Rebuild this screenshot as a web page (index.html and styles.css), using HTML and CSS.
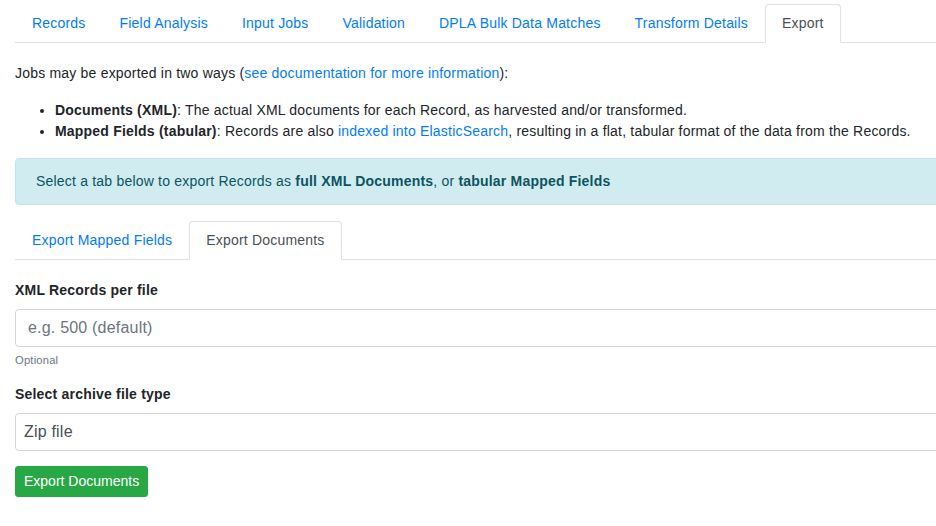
FILE: index.html
```html
<!DOCTYPE html>
<html lang="en">
<head>
<meta charset="utf-8">
<title>Export</title>
<link rel="stylesheet" href="styles.css">
</head>
<body>
<div class="page">
  <ul class="tabs">
    <li class="tab"><a class="tab-link" href="#">Records</a></li>
    <li class="tab"><a class="tab-link" href="#">Field Analysis</a></li>
    <li class="tab"><a class="tab-link" href="#">Input Jobs</a></li>
    <li class="tab"><a class="tab-link" href="#">Validation</a></li>
    <li class="tab"><a class="tab-link" href="#">DPLA Bulk Data Matches</a></li>
    <li class="tab"><a class="tab-link" href="#">Transform Details</a></li>
    <li class="tab"><a class="tab-link active" href="#">Export</a></li>
  </ul>
  <div class="tab-pane">
    <p class="intro">Jobs may be exported in two ways (<a href="#">see documentation for more information</a>):</p>
    <ul class="ways">
      <li><strong>Documents (XML)</strong>: The actual XML documents for each Record, as harvested and/or transformed.</li>
      <li><strong>Mapped Fields (tabular)</strong>: Records are also <a href="#">indexed into ElasticSearch</a>, resulting in a flat, tabular format of the data from the Records.</li>
    </ul>
    <div class="alert">Select a tab below to export Records as <strong>full XML Documents</strong>, or <strong>tabular Mapped Fields</strong></div>
    <ul class="tabs">
      <li class="tab"><a class="tab-link" href="#">Export Mapped Fields</a></li>
      <li class="tab"><a class="tab-link active" href="#">Export Documents</a></li>
    </ul>
    <div class="tab-pane">
      <div class="form-group">
        <label class="label" for="per-file">XML Records per file</label>
        <input class="control" id="per-file" type="text" placeholder="e.g. 500 (default)">
        <small class="help">Optional</small>
      </div>
      <div class="form-group">
        <label class="label" for="archive">Select archive file type</label>
        <select class="control select" id="archive">
          <option>Zip file</option>
          <option>Tar file</option>
        </select>
      </div>
      <button class="btn" type="button">Export Documents</button>
    </div>
  </div>
</div>
</body>
</html>
```
FILE: styles.css
```css
html, body {
  margin: 0;
  padding: 0;
  overflow: hidden;
  background: #fff;
}
body {
  font-family: "Liberation Sans", Arial, sans-serif;
  font-size: 14px;
  line-height: 1.5;
  letter-spacing: 0.2px;
  color: #212529;
}
a {
  color: #007bff;
  text-decoration: none;
}
strong {
  font-weight: bold;
}
.page {
  width: 1140px;
  padding: 4px 0 0 15px;
}
.tabs {
  list-style: none;
  margin: 0;
  padding: 0;
  display: flex;
  border-bottom: 1px solid #dee2e6;
}
.tab {
  margin-bottom: -1px;
}
.tab-link {
  display: block;
  padding: 8px 16px;
  border: 1px solid transparent;
  border-top-left-radius: 4px;
  border-top-right-radius: 4px;
}
.tab-link.active {
  color: #495057;
  background: #fff;
  border-color: #dee2e6 #dee2e6 #fff;
}
.tab-pane {
  padding-top: 20px;
}
.intro {
  margin: 0 0 16px;
}
.ways {
  margin: 0 0 16px;
  padding-left: 40px;
}
.alert {
  padding: 12px 20px;
  margin-bottom: 16px;
  color: #0c5460;
  background: #d1ecf1;
  border: 1px solid #bee5eb;
  border-radius: 4px;
}
.form-group {
  margin-bottom: 15px;
}
.label {
  display: block;
  font-weight: bold;
  margin-bottom: 8px;
}
.control {
  display: block;
  box-sizing: border-box;
  width: 100%;
  height: 38px;
  padding: 6px 12px;
  font-family: inherit;
  font-size: 16px;
  line-height: 1.5;
  letter-spacing: 0.2px;
  color: #495057;
  background: #fff;
  border: 1px solid #ced4da;
  border-radius: 4px;
  margin: 0;
}
.control::placeholder {
  color: #6c757d;
  opacity: 1;
}
.select {
  padding: 6px 8px;
  -webkit-appearance: none;
  appearance: none;
}
.help {
  display: block;
  margin-top: 4px;
  font-size: 11.2px;
  line-height: 18px;
  color: #6c757d;
}
.btn {
  font-family: inherit;
  font-size: 14px;
  line-height: 1.5;
  letter-spacing: 0;
  color: #fff;
  background: #28a745;
  border: 1px solid #28a745;
  border-radius: 3px;
  padding: 4px 8px;
  cursor: pointer;
}
```
